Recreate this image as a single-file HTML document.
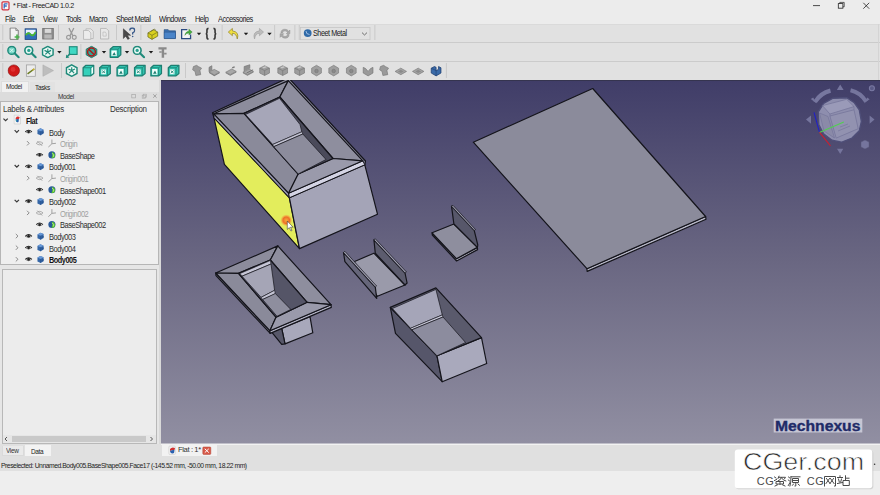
<!DOCTYPE html>
<html><head><meta charset="utf-8"><style>
*{margin:0;padding:0;box-sizing:border-box}
html,body{width:880px;height:495px;overflow:hidden;background:#f0f0f0;font-family:"Liberation Sans",sans-serif;color:#1a1a1a}
.a{position:absolute;white-space:nowrap}
.t{font-size:7.5px;letter-spacing:-0.45px;line-height:9px;color:#2b2b2b}
.mn{font-size:7.5px;letter-spacing:-0.42px;line-height:9px;top:14px;color:#1e1e1e}
svg{position:absolute;left:0;top:0}
</style></head><body>
<div class="a" style="left:0;top:0;width:880px;height:23.5px;background:#ececec"></div>
<div class="a" style="left:13px;top:2.33px;font-size:8px;line-height:8px;letter-spacing:-0.5px;color:#1a1a1a;transform:scaleX(0.89);transform-origin:0 0;">* Flat - FreeCAD 1.0.2</div>
<div class="a" style="left:4.5px;top:15.76px;font-size:8.2px;line-height:8.2px;letter-spacing:-0.5px;color:#1a1a1a;transform:scaleX(0.9);transform-origin:0 0;">File</div>
<div class="a" style="left:23px;top:15.76px;font-size:8.2px;line-height:8.2px;letter-spacing:-0.5px;color:#1a1a1a;transform:scaleX(0.9);transform-origin:0 0;">Edit</div>
<div class="a" style="left:42.5px;top:15.76px;font-size:8.2px;line-height:8.2px;letter-spacing:-0.5px;color:#1a1a1a;transform:scaleX(0.9);transform-origin:0 0;">View</div>
<div class="a" style="left:65.5px;top:15.76px;font-size:8.2px;line-height:8.2px;letter-spacing:-0.5px;color:#1a1a1a;transform:scaleX(0.9);transform-origin:0 0;">Tools</div>
<div class="a" style="left:88.7px;top:15.76px;font-size:8.2px;line-height:8.2px;letter-spacing:-0.5px;color:#1a1a1a;transform:scaleX(0.9);transform-origin:0 0;">Macro</div>
<div class="a" style="left:116px;top:15.76px;font-size:8.2px;line-height:8.2px;letter-spacing:-0.5px;color:#1a1a1a;transform:scaleX(0.9);transform-origin:0 0;">Sheet Metal</div>
<div class="a" style="left:159px;top:15.76px;font-size:8.2px;line-height:8.2px;letter-spacing:-0.5px;color:#1a1a1a;transform:scaleX(0.9);transform-origin:0 0;">Windows</div>
<div class="a" style="left:195px;top:15.76px;font-size:8.2px;line-height:8.2px;letter-spacing:-0.5px;color:#1a1a1a;transform:scaleX(0.9);transform-origin:0 0;">Help</div>
<div class="a" style="left:217.7px;top:15.76px;font-size:8.2px;line-height:8.2px;letter-spacing:-0.5px;color:#1a1a1a;transform:scaleX(0.9);transform-origin:0 0;">Accessories</div>
<div class="a" style="left:0;top:23.5px;width:880px;height:56.5px;background:#e1e1e1"></div>
<div class="a" style="left:0;top:41.5px;width:880px;height:1px;background:#cbcbcb"></div>
<div class="a" style="left:0;top:23.5px;width:880px;height:1.5px;background:#dadada"></div>
<div class="a" style="left:0;top:60.5px;width:880px;height:1px;background:#cbcbcb"></div>
<div class="a" style="left:878.3px;top:23.5px;width:0.8px;height:56px;background:#d4d4d4"></div>
<div class="a" style="left:0;top:80px;width:161px;height:364px;background:#e6e6e6"></div>
<div class="a" style="left:1px;top:81px;width:28px;height:11px;background:#f1f1f1;border:1px solid #dedede;border-bottom:none"></div>
<div class="a" style="left:30px;top:82px;width:25px;height:10px;background:#e2e2e2"></div>
<div class="a" style="left:5.6px;top:83.17px;font-size:7.6px;line-height:7.6px;letter-spacing:-0.4px;color:#222;transform:scaleX(0.85);transform-origin:0 0;">Model</div>
<div class="a" style="left:34.7px;top:83.57px;font-size:7.6px;line-height:7.6px;letter-spacing:-0.4px;color:#222;transform:scaleX(0.85);transform-origin:0 0;">Tasks</div>
<div class="a" style="left:0;top:92px;width:159px;height:8.5px;background:#dcdcdc"></div>
<div class="a" style="left:58px;top:92.77px;font-size:7.6px;line-height:7.6px;letter-spacing:-0.4px;color:#333;transform:scaleX(0.85);transform-origin:0 0;">Model</div>
<div class="a" style="left:0;top:100.5px;width:158.5px;height:164px;background:#efefef;border:1px solid #b6b6b6"></div>
<div class="a" style="left:2.8px;top:104.57px;font-size:8.3px;line-height:8.3px;letter-spacing:-0.3px;color:#333;transform:scaleX(0.96);transform-origin:0 0;">Labels &amp; Attributes</div>
<div class="a" style="left:109.7px;top:104.57px;font-size:8.3px;line-height:8.3px;letter-spacing:-0.3px;color:#333;transform:scaleX(0.96);transform-origin:0 0;">Description</div>
<div class="a" style="left:2px;top:269px;width:155px;height:175px;background:#ececec;border:1px solid #b8b8b8"></div>
<div class="a" style="left:3px;top:435.3px;width:153px;height:7.5px;background:#e6e6e6"></div>
<div class="a" style="left:12.2px;top:435.8px;width:134px;height:6.5px;background:#c9c9c9"></div>
<div class="a" style="left:158.5px;top:80px;width:2.5px;height:364px;background:#d9d9d9"></div>
<div class="a" style="left:0;top:444px;width:880px;height:27px;background:#e0e0e0"></div>
<div class="a" style="left:161px;top:443.5px;width:719px;height:1.5px;background:#f2f2f2"></div>
<div class="a" style="left:0;top:471px;width:880px;height:24px;background:#eeeeee"></div>
<div class="a" style="left:2px;top:445.5px;width:22px;height:10.5px;background:#eaeaea;border:1px solid #dadada;border-top:none"></div>
<div class="a" style="left:24.5px;top:445px;width:26px;height:11px;background:#f3f3f3"></div>
<div class="a" style="left:5.5px;top:446.87px;font-size:7.6px;line-height:7.6px;letter-spacing:-0.4px;color:#333;transform:scaleX(0.85);transform-origin:0 0;">View</div>
<div class="a" style="left:30.5px;top:447.57px;font-size:7.6px;line-height:7.6px;letter-spacing:-0.4px;color:#222;transform:scaleX(0.85);transform-origin:0 0;">Data</div>
<div class="a" style="left:162px;top:444px;width:55px;height:11.6px;background:#f2f2f2"></div>
<div class="a" style="left:177.8px;top:446.23px;font-size:8px;line-height:8px;letter-spacing:-0.4px;color:#333;transform:scaleX(0.95);transform-origin:0 0;">Flat : 1*</div>
<div class="a" style="left:1px;top:461.87px;font-size:7.6px;line-height:7.6px;letter-spacing:-0.5px;color:#222;transform:scaleX(0.89);transform-origin:0 0;">Preselected: Unnamed.Body005.BaseShape005.Face17 (-145.52 mm, -50.00 mm, 18.22 mm)</div>
<div class="a" style="left:25.9px;top:117.07px;font-size:8.3px;line-height:8.3px;letter-spacing:-0.5px;color:#111;font-weight:700;transform:scaleX(0.88);transform-origin:0 0;">Flat</div>
<div class="a" style="left:48.5px;top:128.67px;font-size:8.3px;line-height:8.3px;letter-spacing:-0.5px;color:#2e2e2e;transform:scaleX(0.9);transform-origin:0 0;">Body</div>
<div class="a" style="left:59.9px;top:140.27px;font-size:8.3px;line-height:8.3px;letter-spacing:-0.5px;color:#a0a0a0;transform:scaleX(0.9);transform-origin:0 0;">Origin</div>
<div class="a" style="left:59.9px;top:151.87px;font-size:8.3px;line-height:8.3px;letter-spacing:-0.5px;color:#2e2e2e;transform:scaleX(0.9);transform-origin:0 0;">BaseShape</div>
<div class="a" style="left:48.5px;top:163.47px;font-size:8.3px;line-height:8.3px;letter-spacing:-0.5px;color:#2e2e2e;transform:scaleX(0.9);transform-origin:0 0;">Body001</div>
<div class="a" style="left:59.9px;top:175.07px;font-size:8.3px;line-height:8.3px;letter-spacing:-0.5px;color:#a0a0a0;transform:scaleX(0.9);transform-origin:0 0;">Origin001</div>
<div class="a" style="left:59.9px;top:186.67px;font-size:8.3px;line-height:8.3px;letter-spacing:-0.5px;color:#2e2e2e;transform:scaleX(0.9);transform-origin:0 0;">BaseShape001</div>
<div class="a" style="left:48.5px;top:198.27px;font-size:8.3px;line-height:8.3px;letter-spacing:-0.5px;color:#2e2e2e;transform:scaleX(0.9);transform-origin:0 0;">Body002</div>
<div class="a" style="left:59.9px;top:209.87px;font-size:8.3px;line-height:8.3px;letter-spacing:-0.5px;color:#a0a0a0;transform:scaleX(0.9);transform-origin:0 0;">Origin002</div>
<div class="a" style="left:59.9px;top:221.47px;font-size:8.3px;line-height:8.3px;letter-spacing:-0.5px;color:#2e2e2e;transform:scaleX(0.9);transform-origin:0 0;">BaseShape002</div>
<div class="a" style="left:48.5px;top:233.07px;font-size:8.3px;line-height:8.3px;letter-spacing:-0.5px;color:#2e2e2e;transform:scaleX(0.9);transform-origin:0 0;">Body003</div>
<div class="a" style="left:48.5px;top:244.67px;font-size:8.3px;line-height:8.3px;letter-spacing:-0.5px;color:#2e2e2e;transform:scaleX(0.9);transform-origin:0 0;">Body004</div>
<div class="a" style="left:48.5px;top:256.27px;font-size:8.3px;line-height:8.3px;letter-spacing:-0.5px;color:#111;font-weight:700;transform:scaleX(0.88);transform-origin:0 0;">Body005</div>
<svg width="880" height="495" viewBox="0 0 880 495"><defs>
<linearGradient id="bg" x1="0" y1="0" x2="0" y2="1">
<stop offset="0" stop-color="#403d68"/>
<stop offset="0.5" stop-color="#6a6782"/>
<stop offset="1" stop-color="#918fa2"/>
</linearGradient>
<clipPath id="vp"><rect x="161" y="80" width="719" height="363.5"/></clipPath>
<radialGradient id="glow"><stop offset="0" stop-color="#ff6a20" stop-opacity="0.5"/><stop offset="0.55" stop-color="#f06020" stop-opacity="0.9"/><stop offset="1" stop-color="#ff9040" stop-opacity="0"/></radialGradient>
</defs>
<rect x="161" y="80" width="719" height="363.5" fill="url(#bg)"/>
<rect x="161" y="80" width="719" height="1" fill="#35344f"/>
<g clip-path="url(#vp)"><g stroke="#14141b" stroke-width="1.2" stroke-linejoin="round">
<!-- sheet -->
<polygon points="586.9,268.7 705.6,216.5 706,219.2 587.2,271.4" fill="#b8b8c8"/>
<polygon points="473.3,142.2 592.7,88.5 705.6,216.5 586.9,268.7" fill="#8b8b9b"/>
<!-- big box A -->
<polygon points="212.5,112.8 288.5,77.8 365.5,161 364.8,164.8 289.4,197.8 214,117.8" fill="#8a8a9c"/>
<polygon points="214,117.8 289.4,197.8 299.5,248.6 224.4,164.4" fill="#e3ed5c"/>
<polygon points="289.4,197.8 364.8,164.8 377.5,214.2 299.5,248.6" fill="#a4a4b7"/>
<polygon points="213.8,113.8 288.6,193.2 289.4,197.8 214,117.8" fill="#9090a8" stroke-width="1"/>
<polygon points="288.6,193.2 362.8,160.8 364.8,164.8 289.4,197.8" fill="#d4d4e4" stroke-width="1"/>
<polygon points="288.3,80.6 213.8,113.8 244,113.4 279.8,97" fill="#8c8c9c"/>
<polygon points="288.3,80.6 362.8,160.8 333,158.5 279.8,97" fill="#8e8e9e"/>
<polygon points="213.8,113.8 288.6,193.2 298.2,174 244,113.4" fill="#8a8a9a"/>
<polygon points="288.6,193.2 362.8,160.8 333,158.5 298.2,174" fill="#9a9aab"/>
<polygon points="244,113.4 279.8,97 333,158.5 298.2,174" fill="#4a4a5a"/>
<polygon points="245.5,114.5 279.5,98.3 300,124.5 301.8,131.8 272.7,144.5" fill="#a6a6b8" stroke-width="0.7"/>
<polygon points="272.7,144.5 301.8,131.8 302.8,134 273.7,146.7" fill="#c4c4d4" stroke-width="0.6"/>
<polygon points="273.7,146.7 302.8,134 326,159.5 298.2,174" fill="#8c8c9c" stroke-width="0.7"/>
<!-- cursor glow -->
<circle cx="286.3" cy="220.3" r="6" fill="url(#glow)" stroke="none"/>
<path d="M287.3,221 L287.3,229.4 L289.3,227.6 L290.9,231 L292,230.5 L290.5,227.2 L293.1,227.2 Z" fill="#ffffff" stroke="#222" stroke-width="0.5"/>
<!-- hopper F -->
<polygon points="281.7,328.3 310,316.7 312.8,332.8 285,343.9" fill="#a8a8bb"/>
<polygon points="271.7,332.2 281.7,328.3 285,343.9 281.7,344.4" fill="#58586a"/>
<polygon points="215.7,273 269.9,330.7 270.2,333.4 216,275.7" fill="#7e7e90"/>
<polygon points="269.9,330.7 331,304.7 331.3,307.4 270.2,333.4" fill="#b4b4c6"/>
<polygon points="277.8,245.9 215.7,273 238.5,273.4 270.3,260" fill="#8c8c9c"/>
<polygon points="277.8,245.9 331,304.7 307.1,302.3 270.3,260" fill="#8e8e9e"/>
<polygon points="215.7,273 269.9,330.7 276,317.2 238.5,273.4" fill="#8a8a9a"/>
<polygon points="269.9,330.7 331,304.7 307.1,302.3 276,317.2" fill="#9a9aab"/>
<polygon points="238.5,273.4 270.3,260 307.1,302.3 276,317.2" fill="#555567"/>
<polygon points="240,273.5 270.3,260.5 271,264 242,276.2" fill="#c6c6d6" stroke-width="0.6"/>
<polygon points="242,276.2 271,264 274.6,290.3 261.1,297.4" fill="#a5a5b6" stroke-width="0.7"/>
<polygon points="261.1,297.4 274.6,290.3 275.3,293.9 262.6,299.5" fill="#c4c4d4" stroke-width="0.6"/>
<polygon points="262.6,299.5 275.3,293.5 290.8,309.4 277,316.3" fill="#8e8e9e" stroke-width="0.7"/>
<!-- U channel D -->
<polygon points="354,261.7 373.9,253.2 405,285 377.4,296.3" fill="#9a9aaa"/>
<polygon points="373.9,239.8 405,273 407.1,283 405,285 375.3,253.2" fill="#5c5c6e"/>
<polygon points="373.9,239.8 375.3,238.8 406.5,272 405,273" fill="#9c9cae" stroke-width="0.7"/>
<polygon points="343.5,252.5 375.3,287.1 376.7,298.4 344.9,261.7" fill="#66667a"/>
<polygon points="343.5,252.5 344.9,251.3 376.6,286 375.3,287.1" fill="#9c9cae" stroke-width="0.7"/>
<!-- L bracket C -->
<polygon points="432.1,232.8 456.4,258.7 477.4,247.4 477.6,249.6 456.6,261 432.3,235" fill="#b0b0c0"/>
<polygon points="432.1,232.8 453.9,224 477.4,247.4 456.4,258.7" fill="#8e8e9e"/>
<polygon points="451.5,206.2 453.9,224 477.4,247.4 477.8,245 474.2,230.4" fill="#57576a"/>
<polygon points="451.5,206.2 453,205.3 475.6,229.6 474.2,230.4" fill="#9494a6" stroke-width="0.7"/>
<!-- open box E -->
<polygon points="390.3,307.4 437,355.8 442.2,381.7 395.5,333.3" fill="#56566a"/>
<polygon points="437,355.8 481.5,337.6 486.7,363.5 442.2,381.7" fill="#a9a9bc"/>
<polygon points="390.3,307.4 435.9,287.9 481.5,337.6 437,355.8" fill="#5a5a6c"/>
<polygon points="392.4,308.5 435.9,289.4 442.3,314.9 410.5,328.3" fill="#a5a5b8" stroke-width="0.7"/>
<polygon points="410.5,328.3 442.3,314.9 443,317 411.8,329.8" fill="#c8c8d8" stroke-width="0.6"/>
<polygon points="411.8,329.8 443,317 465.6,342.5 437,355.8" fill="#8c8c9e" stroke-width="0.7"/>
</g>
</g>
<defs>
<symbol id="chd" viewBox="0 0 10 10"><path d="M2.6,3.9 L5,6.3 L7.4,3.9" fill="none" stroke="#3a3a3a" stroke-width="1.3"/></symbol>
<symbol id="chr" viewBox="0 0 10 10"><path d="M3.9,2.6 L6.3,5 L3.9,7.4" fill="none" stroke="#8a8a8a" stroke-width="1.1"/></symbol>
<symbol id="eye" viewBox="0 0 10 10"><path d="M0.8,5.2 Q5,1.2 9.2,5.2" fill="none" stroke="#222" stroke-width="1.3"/><path d="M1.5,5.5 Q5,8 8.5,5.5" fill="none" stroke="#555" stroke-width="0.8"/><circle cx="5" cy="5.2" r="1.7" fill="#222"/></symbol>
<symbol id="eyeh" viewBox="0 0 10 10"><path d="M0.5,5 Q5,1 9.5,5 Q5,9 0.5,5 Z" fill="none" stroke="#9a9a9a" stroke-width="1"/><path d="M2,2 L8.5,8.5" stroke="#9a9a9a" stroke-width="1"/></symbol>
<symbol id="body" viewBox="0 0 10 10"><path d="M1.5,3 L5,1 L8.8,2.6 L8.8,7.2 L5.3,9.3 L1.5,7.6 Z" fill="#3566a6"/><path d="M1.5,3 L5,1 L8.8,2.6 L5.3,4.6 Z" fill="#6a9ad8"/><path d="M5.3,4.6 L5.3,9.3" stroke="#1f4a86" stroke-width="0.6"/><path d="M6.5,5.5 L8.8,4.5 L8.8,6.5 L6.5,7.5Z" fill="#2a5592"/></symbol>
<symbol id="shape" viewBox="0 0 10 10"><circle cx="5" cy="5" r="4.2" fill="#2a5a9a"/><path d="M5,1.5 Q9.5,3 8.5,7 Q6.5,9.5 4.5,8.5 Q6.5,6 5,1.5 Z" fill="#5ac828"/><path d="M5.3,3 Q7.5,4.5 6.8,7.3" stroke="#d8f8b0" stroke-width="0.8" fill="none"/></symbol>
<symbol id="origin" viewBox="0 0 10 10"><path d="M5,5.5 L5,0.8 M5,5.5 L9.5,5 M5,5.5 L1,9.3" stroke="#a0a0a0" stroke-width="1.1" fill="none"/></symbol>
<symbol id="doc" viewBox="0 0 10 12"><path d="M1,0.5 L7,0.5 L9,2.5 L9,11.5 L1,11.5 Z" fill="#f4f4f4" stroke="#c0c0c0" stroke-width="0.6"/><path d="M3,4 Q5,1 8,3 L7,5.5 Q5,4.5 3,6 Z" fill="#d83030"/><path d="M3,6 Q5,4.5 7,5.5 L6.5,9 Q4.5,10 3.5,8.5 Z" fill="#2a60b0"/><path d="M3,6.5 L4.5,6 L4.5,8.5 L3.5,8.5Z" fill="#30a0a0"/></symbol>
</defs>
<!-- tree icons -->
<use href="#chd" x="1.1" y="115.1" width="9" height="9"/>
<use href="#doc" x="13.3" y="114.1" width="8" height="11"/>
<use href="#chd" x="12.3" y="126.7" width="9" height="9"/>
<use href="#eye" x="24.6" y="127.7" width="8" height="8"/>
<use href="#body" x="36.2" y="127.5" width="8.4" height="8.4"/>
<use href="#chr" x="23.5" y="138.8" width="9" height="9"/>
<use href="#eyeh" x="35.8" y="139.5" width="7.6" height="7.6"/>
<use href="#origin" x="47.4" y="138.8" width="9" height="9"/>
<use href="#eye" x="35.6" y="150.9" width="8" height="8"/>
<use href="#shape" x="47.7" y="150.7" width="8.4" height="8.4"/>
<use href="#chd" x="12.3" y="161.5" width="9" height="9"/>
<use href="#eye" x="24.6" y="162.5" width="8" height="8"/>
<use href="#body" x="36.2" y="162.3" width="8.4" height="8.4"/>
<use href="#chr" x="23.5" y="173.6" width="9" height="9"/>
<use href="#eyeh" x="35.8" y="174.3" width="7.6" height="7.6"/>
<use href="#origin" x="47.4" y="173.6" width="9" height="9"/>
<use href="#eye" x="35.6" y="185.7" width="8" height="8"/>
<use href="#shape" x="47.7" y="185.5" width="8.4" height="8.4"/>
<use href="#chd" x="12.3" y="196.3" width="9" height="9"/>
<use href="#eye" x="24.6" y="197.3" width="8" height="8"/>
<use href="#body" x="36.2" y="197.1" width="8.4" height="8.4"/>
<use href="#chr" x="23.5" y="208.4" width="9" height="9"/>
<use href="#eyeh" x="35.8" y="209.1" width="7.6" height="7.6"/>
<use href="#origin" x="47.4" y="208.4" width="9" height="9"/>
<use href="#eye" x="35.6" y="220.5" width="8" height="8"/>
<use href="#shape" x="47.7" y="220.3" width="8.4" height="8.4"/>
<use href="#chr" x="12.3" y="231.6" width="9" height="9"/>
<use href="#eye" x="24.6" y="232.1" width="8" height="8"/>
<use href="#body" x="36.2" y="231.9" width="8.4" height="8.4"/>
<use href="#chr" x="12.3" y="243.2" width="9" height="9"/>
<use href="#eye" x="24.6" y="243.7" width="8" height="8"/>
<use href="#body" x="36.2" y="243.5" width="8.4" height="8.4"/>
<use href="#chr" x="12.3" y="254.8" width="9" height="9"/>
<use href="#eye" x="24.6" y="255.3" width="8" height="8"/>
<use href="#body" x="36.2" y="255.1" width="8.4" height="8.4"/>
<defs>
<symbol id="i_new" viewBox="0 0 16 16"><path d="M3,1 L10,1 L13,4 L13,15 L3,15 Z" fill="#f2f2f2" stroke="#6a6a6a" stroke-width="1"/><path d="M10,1 L10,4 L13,4" fill="#d0d0d0" stroke="#6a6a6a" stroke-width="0.8"/><path d="M11.5,9 L11.5,15 M8.5,12 L14.5,12" stroke="#4ab04a" stroke-width="2"/></symbol>
<symbol id="i_open" viewBox="0 0 16 16"><rect x="1" y="2" width="14" height="13" fill="#2f6fb8" stroke="#1a3f7a" stroke-width="1"/><path d="M2,9 Q5,4 8,8 Q11,11 14,5 L14,3 L2,3 Z" fill="#e8f0ff"/><path d="M2,10 Q5,5 8,9 Q11,12 14,6" stroke="#4ab830" stroke-width="2.2" fill="none"/></symbol>
<symbol id="i_save" viewBox="0 0 16 16"><rect x="1.5" y="1.5" width="13" height="13" fill="#8e8e8e" stroke="#6e6e6e"/><rect x="4" y="2" width="8" height="5" fill="#d8d8d8"/><rect x="3.5" y="9" width="9" height="5" fill="#b8b8b8"/></symbol>
<symbol id="i_cut" viewBox="0 0 16 16"><path d="M5,1 L10,11 M11,1 L6,11" stroke="#9a9a9a" stroke-width="1.6"/><circle cx="4.5" cy="12.5" r="2.4" fill="none" stroke="#9a9a9a" stroke-width="1.4"/><circle cx="11.5" cy="12.5" r="2.4" fill="none" stroke="#9a9a9a" stroke-width="1.4"/></symbol>
<symbol id="i_copy" viewBox="0 0 16 16"><path d="M5,2 L11,2 L14,5 L14,14 L5,14Z" fill="#e8e8e8" stroke="#b4b4b4"/><path d="M2,4 L8,4 L11,7 L11,15 L2,15Z" fill="#ececec" stroke="#b4b4b4"/></symbol>
<symbol id="i_paste" viewBox="0 0 16 16"><path d="M3,1.5 L10,1.5 L13,4.5 L13,14.5 L3,14.5Z" fill="#e8e8e8" stroke="#b0b0b0"/><path d="M6,6 L9,6 L10,8 L10,11 L6,11Z" fill="none" stroke="#c0c0c0"/></symbol>
<symbol id="i_what" viewBox="0 0 16 16"><path d="M1,2 L1,14 L4,11 L6.5,15 L8.5,14 L6,10 L10,10 Z" fill="#4a4a4a" stroke="#333" stroke-width="0.6"/><path d="M9,4 Q9,1 12,1 Q15,1 15,4 Q15,6 12.5,7 L12.5,9" fill="none" stroke="#3a5a8a" stroke-width="1.6"/><circle cx="12.5" cy="11.5" r="1" fill="#3a5a8a"/></symbol>
<symbol id="i_part" viewBox="0 0 16 16"><path d="M2,7 L9,3 L14,6 L14,11 L7,15 L2,12 Z" fill="#d8d020" stroke="#6a6a20" stroke-width="0.9"/><path d="M2,7 L7,10 L14,6 M7,10 L7,15" stroke="#6a6a20" stroke-width="0.8" fill="none"/><path d="M5,5.5 L10,2.5 L12,4" fill="none" stroke="#6a6a20" stroke-width="0.8"/></symbol>
<symbol id="i_folder" viewBox="0 0 16 16"><path d="M1,3 L6,3 L7,4.5 L15,4.5 L15,14 L1,14 Z" fill="#3a70b0" stroke="#284f80" stroke-width="0.8"/><rect x="1" y="6" width="14" height="8" fill="#4a84c8" stroke="#284f80" stroke-width="0.6"/></symbol>
<symbol id="i_export" viewBox="0 0 16 16"><path d="M9,3 L2,3 L2,14 L13,14 L13,9" fill="#f4f4f4" stroke="#2a4a80" stroke-width="1.6"/><path d="M6,10 Q7,5 11,5 L11,2.5 L15,6 L11,9.5 L11,7 Q8,7 6,10Z" fill="#48b040" stroke="#2a7a2a" stroke-width="0.5"/></symbol>
<symbol id="i_brace" viewBox="0 0 16 16"><path d="M5,1.5 Q3,1.5 3,4 L3,6.5 Q3,8 1.5,8 Q3,8 3,9.5 L3,12 Q3,14.5 5,14.5 M11,1.5 Q13,1.5 13,4 L13,6.5 Q13,8 14.5,8 Q13,8 13,9.5 L13,12 Q13,14.5 11,14.5" fill="none" stroke="#383838" stroke-width="2"/></symbol>
<symbol id="i_undo" viewBox="0 0 16 16"><path d="M6,1.5 L1,6 L6,10.5 L6,7.5 Q11,7.5 12,14.5 Q15,6 6,4.5 Z" fill="#f0e040" stroke="#8a7a20" stroke-width="0.8"/></symbol>
<symbol id="i_redo" viewBox="0 0 16 16"><path d="M10,1.5 L15,6 L10,10.5 L10,7.5 Q5,7.5 4,14.5 Q1,6 10,4.5 Z" fill="#bcbcbc" stroke="#a0a0a0" stroke-width="0.8"/></symbol>
<symbol id="i_refresh" viewBox="0 0 16 16"><path d="M3,7 Q3,2.5 8,2.5 Q11,2.5 12.5,5 L14,3.5 L14,8 L9.5,8 L11,6.5 Q10,4.5 8,4.5 Q5,4.5 5,7Z" fill="#a8a8a8" stroke="#909090" stroke-width="0.6"/><path d="M13,9 Q13,13.5 8,13.5 Q5,13.5 3.5,11 L2,12.5 L2,8 L6.5,8 L5,9.5 Q6,11.5 8,11.5 Q11,11.5 11,9Z" fill="#a8a8a8" stroke="#909090" stroke-width="0.6"/></symbol>
<symbol id="i_dd" viewBox="0 0 6 6"><path d="M0.8,2 L5.2,2 L3,4.5Z" fill="#1a1a1a"/></symbol>
<symbol id="i_zoomfit" viewBox="0 0 16 16"><circle cx="6" cy="6" r="4.8" fill="#7ad8c8" stroke="#1f8a7a" stroke-width="1.8"/><path d="M9.5,9.5 L14.5,14.5" stroke="#1f8a7a" stroke-width="2.6" stroke-linecap="round"/><path d="M4,4 L8,8 M8,4 L4,8" stroke="#e8fff8" stroke-width="1"/></symbol>
<symbol id="i_zoomsel" viewBox="0 0 16 16"><circle cx="6" cy="6" r="4.8" fill="#e8f8f4" stroke="#1f8a7a" stroke-width="2"/><circle cx="6" cy="6" r="2" fill="#2aa090"/><path d="M9.5,9.5 L14.5,14.5" stroke="#1f8a7a" stroke-width="2.6" stroke-linecap="round"/></symbol>
<symbol id="i_iso" viewBox="0 0 16 16"><path d="M8,1 L14.5,4.5 L14.5,11.5 L8,15 L1.5,11.5 L1.5,4.5Z" fill="#eaf8f4" stroke="#1f8a7a" stroke-width="1.8"/><path d="M8,4 L8,8 M4,6 L8,8 L12,6 M5,11 L8,8 L11,11" stroke="#1f8a7a" stroke-width="1.4" fill="none"/></symbol>
<symbol id="i_isof" viewBox="0 0 16 16"><path d="M8,1 L14.5,4.5 L14.5,11.5 L8,15 L1.5,11.5 L1.5,4.5Z" fill="#38d0bc" stroke="#1f8a7a" stroke-width="1.6"/><path d="M1.5,4.5 L8,8 L14.5,4.5 M8,8 L8,15" stroke="#1f8a7a" stroke-width="1" fill="none"/><path d="M10,9 L13,7.5 L13,11 L10,12.5Z" fill="#f0fffc"/></symbol>
<symbol id="i_isow" viewBox="0 0 16 16"><path d="M8,1 L14.5,4.5 L14.5,11.5 L8,15 L1.5,11.5 L1.5,4.5Z" fill="#30c8b4" stroke="#1f8a7a" stroke-width="1.6"/><path d="M4,6 L8,8 L12,6 L12,10 L8,12.5 L4,10Z" fill="#f0fffc" stroke="#1f8a7a" stroke-width="0.8"/><path d="M6,8 L8,10 L10,8" stroke="#1f8a7a" stroke-width="1" fill="none"/></symbol>
<symbol id="i_square" viewBox="0 0 16 16"><rect x="5" y="1.5" width="9.5" height="9.5" fill="#40d8c4" stroke="#1f8a7a" stroke-width="1.4"/><path d="M1,15 L6,10" stroke="#1f8a7a" stroke-width="1.8"/><path d="M1,15 L1,11 L5,15Z" fill="#1f8a7a"/></symbol>
<symbol id="i_cancel" viewBox="0 0 16 16"><path d="M8,1 L14.5,4.5 L14.5,11.5 L8,15 L1.5,11.5 L1.5,4.5Z" fill="#30a898" stroke="#1f7a6a" stroke-width="1.2"/><circle cx="8" cy="8" r="4.8" fill="none" stroke="#b01818" stroke-width="1.8"/><path d="M4.8,4.8 L11.2,11.2" stroke="#b01818" stroke-width="1.8"/></symbol>
<symbol id="i_measure" viewBox="0 0 16 16"><path d="M3,2 L13,2 L13,5 L10,5 L10,15 L7,15 L7,5 L3,5Z" fill="#8a8a8a"/><path d="M4,7 L7,7 L7,9 L4,9Z M10,9 L13,9 L13,11 L10,11Z" fill="#8a8a8a"/></symbol>
<symbol id="i_rec" viewBox="0 0 16 16"><circle cx="8" cy="8" r="7" fill="#d01818" stroke="#8a1010" stroke-width="0.8"/><circle cx="7" cy="6.5" r="3" fill="#e84040" opacity="0.6"/></symbol>
<symbol id="i_macro" viewBox="0 0 16 16"><rect x="2.5" y="1" width="11" height="14" fill="#ececec" stroke="#9a9a9a" stroke-width="0.9"/><path d="M4,12 L12,6" stroke="#6a7a20" stroke-width="1.8"/><path d="M10,7.5 L12.5,5.8" stroke="#c8b030" stroke-width="1.8"/></symbol>
<symbol id="i_play" viewBox="0 0 16 16"><path d="M2,1 L15,8 L2,15Z" fill="#bdbdbd" stroke="#a8a8a8" stroke-width="0.6"/></symbol>
<symbol id="i_sm1" viewBox="0 0 16 16"><path d="M2,6 L8,3 L14,6 L14,11 L8,14 L2,11Z" fill="#9a9a9a" stroke="#7a7a7a" stroke-width="0.8"/><path d="M2,6 L8,9 L14,6 M8,9 L8,14" stroke="#7a7a7a" stroke-width="0.8" fill="none"/></symbol>
<symbol id="i_sm2" viewBox="0 0 16 16"><path d="M2,9 L8,6 L14,9 L8,12Z" fill="#a8a8a8" stroke="#7a7a7a" stroke-width="0.8"/><path d="M2,9 L2,11 L8,14 L14,11 L14,9 L8,12Z" fill="#8a8a8a" stroke="#7a7a7a" stroke-width="0.6"/></symbol>
<symbol id="i_sm3" viewBox="0 0 16 16"><path d="M1,9 L5,2 L8,3.5 L5,10 L13,6 L15,10 L8,14 L1,11Z" fill="#9e9e9e" stroke="#787878" stroke-width="0.8"/></symbol>
<symbol id="i_blue" viewBox="0 0 16 16"><path d="M2,5 L6,3 L8,4 L8,8 L11,6.5 L11,3 L14,4.5 L14,11 L8,14.5 L2,11Z" fill="#3a6aa8" stroke="#1f3f70" stroke-width="0.9"/><path d="M2,5 L8,8 L8,14.5" stroke="#1f3f70" stroke-width="0.7" fill="none"/></symbol>
<symbol id="i_smL" viewBox="0 0 16 16"><path d="M1.5,9.5 L8,6.5 L14.5,10 L8,13.5Z" fill="#a6a6a6" stroke="#767676" stroke-width="0.8"/><path d="M1.5,9.5 L1.5,4 L5,2 L5,7.8" fill="#8e8e8e" stroke="#767676" stroke-width="0.8"/><path d="M1.5,9.5 L1.5,11 L8,14.8 L14.5,11.2 L14.5,10 L8,13.5Z" fill="#7e7e7e"/></symbol>
<symbol id="i_smP" viewBox="0 0 16 16"><path d="M1.5,10 L9,6 L14.5,9 L7,13Z" fill="#a8a8a8" stroke="#767676" stroke-width="0.8"/><path d="M1.5,10 L1.5,11.3 L7,14.3 L14.5,10.3 L14.5,9 L7,13Z" fill="#808080"/><path d="M9,4 L12,2.5 L13,4 L10,5.5Z" fill="#7a7a7a"/></symbol>
<symbol id="i_smW" viewBox="0 0 16 16"><path d="M1.5,10 L9,6 L14.5,9 L7,13Z" fill="#a8a8a8" stroke="#767676" stroke-width="0.8"/><path d="M3,9 L3,3 L10,0.8 L10,5.5" fill="#909090" stroke="#767676" stroke-width="0.8"/><path d="M1.5,10 L1.5,11.3 L7,14.3 L14.5,10.3 L14.5,9 L7,13Z" fill="#808080"/><path d="M6,11 L14,7" stroke="#6a6a6a" stroke-width="1"/></symbol>
<symbol id="i_smB" viewBox="0 0 16 16"><path d="M2,5 L8,2 L14,5 L14,11 L8,14 L2,11Z" fill="#9c9c9c" stroke="#777" stroke-width="0.8"/><path d="M2,5 L8,8 L14,5 M8,8 L8,14" stroke="#777" stroke-width="0.8" fill="none"/><path d="M5,4 L9,2.5 L11,3.5 L7,5.5Z" fill="#c8c8c8"/></symbol>
<symbol id="i_smH" viewBox="0 0 16 16"><path d="M8,1.5 L14,5 L14,11 L8,14.5 L2,11 L2,5Z" fill="#a0a0a0" stroke="#7a7a7a" stroke-width="0.8"/><circle cx="8" cy="8.5" r="2.2" fill="#8a8a8a" stroke="#707070" stroke-width="0.6"/></symbol>
<symbol id="i_smU" viewBox="0 0 16 16"><path d="M2,4 L2,11 L8,14.5 L14,11 L14,4 L11,5.5 L8,9 L5,5.5Z" fill="#9a9a9a" stroke="#777" stroke-width="0.8"/></symbol>
<symbol id="i_smD" viewBox="0 0 16 16"><path d="M1,9 L8,5 L15,9 L8,13Z" fill="#a4a4a4" stroke="#767676" stroke-width="0.8"/><path d="M4.5,9 L8,7 L11.5,9 L8,11Z" fill="#8a8a8a"/></symbol>
<symbol id="i_smS" viewBox="0 0 16 16"><path d="M3,3 L7,1.5 L9,3 L13,5 L11,8 L12,13 L6,14 L5,9 L2,7Z" fill="#9a9a9a" stroke="#777" stroke-width="0.8"/></symbol>
<symbol id="i_cube1" viewBox="0 0 16 16"><path d="M1.5,4.5 L5,1.5 L14.5,1.5 L14.5,11.5 L11,14.5 L1.5,14.5Z" fill="#2fc4b0" stroke="#1d7f72" stroke-width="1.6" stroke-linejoin="round"/><path d="M1.5,4.5 L11,4.5 L14.5,1.5 M11,4.5 L11,14.5" stroke="#1d7f72" stroke-width="1" fill="none"/><path d="M3.5,6.5 L9,6.5 L9,12.5 L3.5,12.5Z" fill="#f4fffd"/><path d="M4.5,8 L8,11 M8,8 L4.5,11" stroke="#1d7f72" stroke-width="1.1"/></symbol>
<symbol id="i_cube2" viewBox="0 0 16 16"><path d="M1.5,4.5 L5,1.5 L14.5,1.5 L14.5,11.5 L11,14.5 L1.5,14.5Z" fill="#34d0ba" stroke="#1d7f72" stroke-width="1.6" stroke-linejoin="round"/><path d="M1.5,4.5 L11,4.5 L14.5,1.5 M11,4.5 L11,14.5" stroke="#1d7f72" stroke-width="1" fill="none"/><path d="M11.8,5 L13.8,3.2 L13.8,10.8 L11.8,12.6Z" fill="#f4fffd"/></symbol>
<symbol id="i_cube3" viewBox="0 0 16 16"><path d="M1.5,4.5 L5,1.5 L14.5,1.5 L14.5,11.5 L11,14.5 L1.5,14.5Z" fill="#2fc4b0" stroke="#1d7f72" stroke-width="1.6" stroke-linejoin="round"/><path d="M1.5,4.5 L11,4.5 L14.5,1.5 M11,4.5 L11,14.5" stroke="#1d7f72" stroke-width="1" fill="none"/><path d="M3,6 L9.5,6 L9.5,13 L3,13Z" fill="#f4fffd"/><path d="M4,12 L6.5,8 L8.5,12Z" fill="#1d7f72"/></symbol>
</defs>
<rect x="2.3" y="25" width="1" height="15" fill="#c9c9c9"/>
<rect x="2.3" y="44" width="1" height="15" fill="#c9c9c9"/>
<rect x="2.3" y="63" width="1" height="15" fill="#c9c9c9"/>
<use href="#i_new" x="7.7" y="27.2" width="13" height="13"/>
<use href="#i_open" x="24.2" y="27.2" width="13" height="13"/>
<use href="#i_save" x="41.5" y="27.2" width="13" height="13"/>
<rect x="58.2" y="25" width="0.8" height="15" fill="#c4c4c4"/>
<use href="#i_cut" x="64.9" y="27.2" width="13" height="13"/>
<use href="#i_copy" x="81.9" y="27.2" width="13" height="13"/>
<use href="#i_paste" x="98.1" y="27.2" width="13" height="13"/>
<rect x="116.0" y="25" width="0.8" height="15" fill="#c4c4c4"/>
<use href="#i_what" x="122.5" y="27.2" width="13" height="13"/>
<rect x="140.5" y="25" width="0.8" height="15" fill="#c4c4c4"/>
<use href="#i_part" x="146.3" y="27.2" width="13" height="13"/>
<use href="#i_folder" x="163.3" y="27.2" width="13" height="13"/>
<use href="#i_export" x="180.0" y="27.2" width="13" height="13"/>
<use href="#i_dd" x="196.0" y="30.7" width="6" height="6"/>
<use href="#i_brace" x="204.5" y="27.2" width="13" height="13"/>
<rect x="221.7" y="25" width="0.8" height="15" fill="#c4c4c4"/>
<use href="#i_undo" x="227.5" y="27.2" width="13" height="13"/>
<use href="#i_dd" x="243.0" y="30.7" width="6" height="6"/>
<use href="#i_redo" x="251.3" y="27.2" width="13" height="13"/>
<use href="#i_dd" x="266.5" y="30.7" width="6" height="6"/>
<rect x="274.3" y="25" width="0.8" height="15" fill="#c4c4c4"/>
<use href="#i_refresh" x="278.5" y="27.2" width="13" height="13"/>
<rect x="294.5" y="25" width="0.8" height="15" fill="#c4c4c4"/>
<rect x="298.8" y="25" width="0.8" height="15" fill="#c4c4c4"/>
<rect x="374.5" y="25" width="0.8" height="15" fill="#c4c4c4"/>
<use href="#i_zoomfit" x="6.9" y="45.5" width="13" height="13"/>
<use href="#i_zoomsel" x="23.9" y="45.5" width="13" height="13"/>
<use href="#i_iso" x="41.3" y="45.5" width="13" height="13"/>
<use href="#i_dd" x="56.4" y="49.0" width="6" height="6"/>
<use href="#i_square" x="65.3" y="45.5" width="13" height="13"/>
<rect x="80.5" y="44" width="0.8" height="15" fill="#c4c4c4"/>
<use href="#i_cancel" x="85.0" y="45.5" width="13" height="13"/>
<use href="#i_dd" x="101.0" y="49.0" width="6" height="6"/>
<use href="#i_cube3" x="109.0" y="45.5" width="13" height="13"/>
<use href="#i_dd" x="124.0" y="49.0" width="6" height="6"/>
<use href="#i_zoomsel" x="132.3" y="45.5" width="13" height="13"/>
<use href="#i_dd" x="148.0" y="49.0" width="6" height="6"/>
<use href="#i_measure" x="156.0" y="45.5" width="13" height="13"/>
<use href="#i_rec" x="7.3" y="64.1" width="13" height="13"/>
<use href="#i_macro" x="24.3" y="64.1" width="13" height="13"/>
<use href="#i_play" x="41.3" y="64.1" width="13" height="13"/>
<rect x="61.0" y="63" width="0.8" height="15" fill="#c4c4c4"/>
<use href="#i_iso" x="65.2" y="64.1" width="13" height="13"/>
<use href="#i_cube2" x="81.9" y="64.1" width="13" height="13"/>
<use href="#i_cube1" x="98.5" y="64.1" width="13" height="13"/>
<use href="#i_cube3" x="115.8" y="64.1" width="13" height="13"/>
<use href="#i_cube1" x="133.3" y="64.1" width="13" height="13"/>
<use href="#i_cube3" x="149.7" y="64.1" width="13" height="13"/>
<use href="#i_cube1" x="167.1" y="64.1" width="13" height="13"/>
<rect x="185.0" y="63" width="0.8" height="15" fill="#c4c4c4"/>
<use href="#i_smS" x="191.0" y="64.1" width="13" height="13"/>
<use href="#i_smL" x="207.8" y="64.1" width="13" height="13"/>
<use href="#i_smP" x="224.5" y="64.1" width="13" height="13"/>
<use href="#i_smW" x="241.7" y="64.1" width="13" height="13"/>
<use href="#i_smB" x="258.1" y="64.1" width="13" height="13"/>
<use href="#i_smB" x="276.2" y="64.1" width="13" height="13"/>
<use href="#i_smB" x="293.1" y="64.1" width="13" height="13"/>
<use href="#i_smH" x="310.0" y="64.1" width="13" height="13"/>
<use href="#i_smH" x="327.2" y="64.1" width="13" height="13"/>
<use href="#i_smH" x="344.8" y="64.1" width="13" height="13"/>
<use href="#i_smU" x="361.6" y="64.1" width="13" height="13"/>
<use href="#i_smS" x="378.0" y="64.1" width="13" height="13"/>
<use href="#i_smD" x="394.3" y="64.1" width="13" height="13"/>
<use href="#i_smD" x="411.7" y="64.1" width="13" height="13"/>
<use href="#i_blue" x="429.6" y="64.1" width="13" height="13"/>
<rect x="445.9" y="63" width="0.8" height="15" fill="#c4c4c4"/></svg>
<div id="ov"></div>
<svg width="880" height="495" viewBox="0 0 880 495" style="position:absolute;left:0;top:0">
<!-- app icon -->
<rect x="2" y="1.8" width="7" height="8" rx="1" fill="#f8f8f8" stroke="#d03040" stroke-width="1.2"/>
<path d="M4.2,3.8 L7.5,3.8 M4.2,3.8 L4.2,8.5 M4.2,6 L6.8,6" stroke="#3a6ac0" stroke-width="1.3" fill="none"/>
<!-- window controls -->
<path d="M813,5.6 L820,5.6" stroke="#222" stroke-width="0.8"/>
<rect x="838.3" y="3.6" width="4.6" height="4.6" fill="none" stroke="#222" stroke-width="0.8"/>
<path d="M839.8,3.6 L839.8,2.4 L844.2,2.4 L844.2,6.8 L842.9,6.8" fill="none" stroke="#222" stroke-width="0.7"/>
<path d="M863.3,2.8 L869.2,8.7 M869.2,2.8 L863.3,8.7" stroke="#222" stroke-width="0.8"/>
<!-- combo -->
<rect x="300.5" y="27.4" width="69.5" height="12.3" fill="#e1e1e1" stroke="#c6c6c6" stroke-width="0.8"/>
<circle cx="307.7" cy="33.1" r="3.9" fill="#2f6aa8"/>
<path d="M306,31 Q306,34.5 309.5,34.5" stroke="#b8d0f0" stroke-width="0.8" fill="none"/>
<path d="M362,32.6 L364.5,35 L367,32.6" stroke="#505050" stroke-width="0.8" fill="none"/>
<!-- panel title buttons -->
<rect x="131.8" y="94.3" width="3.6" height="3.6" fill="none" stroke="#a0a0a0" stroke-width="0.6"/>
<rect x="142.2" y="95.2" width="3.4" height="3" fill="none" stroke="#a8a8a8" stroke-width="0.6"/>
<rect x="143.2" y="94.2" width="3.4" height="3" fill="none" stroke="#a8a8a8" stroke-width="0.6"/>
<path d="M153.2,94.3 L156.6,97.7 M156.6,94.3 L153.2,97.7" stroke="#888" stroke-width="0.7"/>
<!-- scroll arrows -->
<path d="M7,437 L5,439 L7,441" stroke="#333" stroke-width="0.8" fill="none"/>
<path d="M150.5,437 L152.5,439 L150.5,441" stroke="#333" stroke-width="0.8" fill="none"/>
<!-- doc tab icon + close -->
<rect x="168.8" y="446" width="6.6" height="8.5" rx="1" fill="#f0f0f0" stroke="#c8c8c8" stroke-width="0.5"/>
<path d="M170,449 Q172,446.5 175,448 L174.5,450 Q172.5,449.5 170,451Z" fill="#d03030"/>
<path d="M170,451 Q172.5,449.5 174.5,450 L174,453 Q172,454 170.5,452.5Z" fill="#2a60b0"/>
<rect x="202.8" y="447" width="8" height="7.4" rx="0.8" fill="#d85a4a" stroke="#b04030" stroke-width="0.5"/>
<path d="M204.8,448.8 L208.8,452.6 M208.8,448.8 L204.8,452.6" stroke="#fff" stroke-width="1"/>
</svg>
<div class="a" style="left:312.7px;top:29.5px;font-size:8.2px;line-height:8.2px;letter-spacing:-0.5px;color:#222;transform:scaleX(0.88);transform-origin:0 0">Sheet Metal</div>
<svg width="880" height="495" viewBox="0 0 880 495" style="position:absolute;left:0;top:0">
<!-- nav cube -->
<g fill="#7878a0" stroke="none" opacity="0.95">
<path d="M836.8,90 L843.6,90 L840.2,84.5 Z"/>
<path d="M837,148.8 L843.3,148.8 L840.2,154 Z"/>
<path d="M806,119.6 L811,115.5 L811,123.8 Z"/>
<path d="M874.5,119.6 L869.6,115.5 L869.6,123.8 Z"/>
<circle cx="871.9" cy="88.3" r="2.5" fill="#5c5c88" stroke="#7c7ca6" stroke-width="1.1"/>
<path d="M815,102 Q820.5,93 830.5,90.6" stroke="#7a7aa2" stroke-width="4.2" fill="none"/>
<path d="M810.8,99 L816.5,103.5 L813.2,97.4Z"/>
<path d="M850.5,90.2 Q860.5,92.5 866,101.5" stroke="#7878a0" stroke-width="4" fill="none"/>
<path d="M869.6,99.2 L864,103.5 L867.2,97.4Z"/>
<path d="M861,142 L865,140 L869,142 L869,147 L865,149 L861,147Z" stroke="#58587a" stroke-width="0.5"/>
</g>
<polygon points="818.3,111.9 823.6,103.5 833,98.2 846.7,97.7 854,102.4 859.3,109.8 861.4,121.3 859.3,130.8 852,138.1 841.4,142.3 832,140.2 823.6,133.9 818.8,124.5" fill="#8e8eae" stroke="#4e4e78" stroke-width="1.4"/>
<polygon points="822.5,105.6 846.7,99.3 854,106.6 829.9,114" fill="#9a9ab8" stroke="#727298" stroke-width="0.7" stroke-linejoin="round"/>
<polygon points="829.9,116 854,109.8 858.2,128.7 836.2,138.1" fill="#9292b0" stroke="#727298" stroke-width="0.7" stroke-linejoin="round"/>
<polygon points="819.5,113 828,116.5 834.5,138 824,131" fill="#8a8aa8" stroke="#727298" stroke-width="0.6"/>
<path d="M829.9,114 L829.9,116 M854,106.6 L854,109.8 M840,127 L848,124 M838,131 L850,126" stroke="#727298" stroke-width="0.6" fill="none"/>
<path d="M819.5,132.4 L814,112.4" stroke="#2020c8" stroke-width="1.1"/>
<path d="M819.5,132.4 L843.8,122.1" stroke="#50d050" stroke-width="1.1"/>
<path d="M819.5,132.4 L830.5,145.8" stroke="#c82030" stroke-width="1.1"/>
<!-- Mechnexus -->
<rect x="773.7" y="418.6" width="88.6" height="13.9" fill="#c6c6d4"/>
<!-- CGer box -->
<rect x="735.8" y="450.6" width="137.5" height="38.6" rx="3" fill="#b8b8b8" opacity="0.5"/>
<rect x="734.8" y="449.6" width="137.5" height="38.6" rx="3" fill="#ffffff"/>
<circle cx="874.6" cy="464.2" r="0.8" fill="#333"/>
<!-- Chinese glyph approximations -->
<g stroke="#4a4a4a" stroke-width="1" fill="none" stroke-linecap="square">
<!-- 资 773.4-786.1 -->
<path d="M774.5,477 L776,478 M774.5,480.5 L776.5,479.5 M779,476.2 L778,478.5 M778.5,477.3 L785.5,477.3 L784.5,478.8 M781.5,477.5 Q781,480 778,481 M782,478.5 Q783,480.5 785.8,481"/>
<path d="M776.5,481.5 L783.5,481.5 L783.5,484 L776.5,484 Z M780,482.5 L780,484.5 M777.5,484.8 L775,486 M782.5,484.8 L785,486"/>
<!-- 源 787.7-800.5 -->
<path d="M788.5,477 L789.8,478 M788.3,480 L789.6,481 M788.3,485.5 L790,482.5"/>
<path d="M791,476.8 L800,476.8 M791,476.8 Q791,483 790,486 M793,478.5 L798.5,478.5 L798.5,482.5 L793,482.5 Z M793,480.5 L798.5,480.5 M795.8,482.5 L795.8,486 L795,486 M793.5,484 L792.5,485.3 M798,484 L799.5,485.3"/>
<!-- 网 823.5-836.2 -->
<path d="M824.5,486 L824.5,476.5 L835.5,476.5 L835.5,486 L834.5,486"/>
<path d="M826.5,478.5 L830,483.5 M829.5,478.5 L826,483.5 M830.5,478.5 L834,483.5 M833.5,478.5 L830,483.5"/>
<!-- 站 837-849.8 -->
<path d="M840,475.8 L840,477 M837.5,477.5 L842.5,477.5 M838.5,479 L839.3,482 M841.5,479 L840.7,482 M837.5,483.5 L842.5,482.5"/>
<path d="M845.5,475.8 L845.5,480.5 M845.5,478.2 L849,478.2 M843.5,480.5 L849.3,480.5 L849.3,485.5 L843.5,485.5 Z"/>
</g>
</svg>
<div class="a" style="left:775.4px;top:417.7px;font-size:14px;font-weight:700;line-height:16px;color:#1f2b68;transform:scaleX(1.12);transform-origin:0 0;-webkit-text-stroke:0.35px #1f2b68">Mechnexus</div>
<div class="a" style="left:742.5px;top:449px;font-size:23px;line-height:26px;color:#2a2a2a;-webkit-text-stroke:0.6px #fff;transform:scaleX(1.17);transform-origin:0 0">CGer.com</div>
<div class="a" style="left:756.7px;top:475px;font-size:11px;letter-spacing:0.5px;line-height:12px;color:#4a4a4a">CG</div>
<div class="a" style="left:806.8px;top:475px;font-size:11px;letter-spacing:0.5px;line-height:12px;color:#4a4a4a">CG</div>

</body></html>
